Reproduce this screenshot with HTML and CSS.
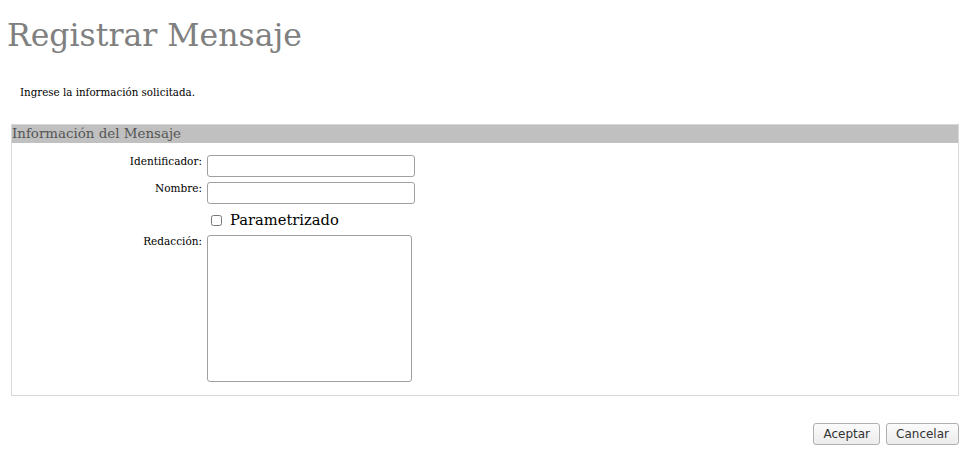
FILE: index.html
```html
<!DOCTYPE html>
<html>
<head>
<meta charset="utf-8">
<link rel="stylesheet" href="styles.css">
</head>
<body>
<h1 class="title">Registrar Mensaje</h1>
<p class="intro">Ingrese la información solicitada.</p>
<div class="panel">
  <div class="panel-head">Información del Mensaje</div>
  <div class="form">
    <label class="lbl">Identificador:</label>
    <input class="inp" type="text">
    <label class="lbl">Nombre:</label>
    <input class="inp" type="text">
    <span></span>
    <label class="chk"><input type="checkbox" class="box"><span>Parametrizado</span></label>
    <label class="lbl">Redacción:</label>
    <textarea class="area"></textarea>
  </div>
</div>
<div class="actions">
  <button class="btn">Aceptar</button>
  <button class="btn">Cancelar</button>
</div>
</body>
</html>
```
FILE: styles.css
```css
html, body { margin: 0; padding: 0; background: #fff; }
body { font-family: "DejaVu Serif", serif; color: #000; width: 975px; }
.title {
  margin: 0;
  padding: 15px 0 0 7px;
  font-weight: normal;
  font-size: 31.5px;
  line-height: 40px;
  color: #808080;
}
.intro {
  margin: 30px 0 0 20px;
  font-size: 10.3px;
  line-height: 14px;
}
.panel {
  margin: 25px 16px 0 11px;
  border: 1px solid #d8d8d8;
  height: 270px;
}
.panel-head {
  background: #c0c0c0;
  color: #555;
  font-size: 13.4px;
  line-height: 18px;
  height: 18px;
}
.form {
  display: grid;
  grid-template-columns: 190px auto;
  column-gap: 5px;
  row-gap: 5px;
  padding-top: 12px;
  justify-items: start;
  align-items: start;
}
.lbl {
  justify-self: end;
  font-size: 10.5px;
  line-height: 12px;
}
.inp {
  box-sizing: border-box;
  width: 208px;
  height: 22px;
  border: 1px solid #a0a0a0;
  border-radius: 3px;
  margin: 0;
}
.chk {
  display: flex;
  align-items: center;
  font-size: 14.7px;
  line-height: 20px;
  margin-top: 1px;
}
.box {
  margin: 0 8px 0 4px;
  width: 11px;
  height: 11px;
}
.area {
  box-sizing: border-box;
  width: 205px;
  height: 147px;
  border: 1px solid #a0a0a0;
  border-radius: 3px;
  margin: 0;
  resize: none;
}
.actions {
  display: flex;
  justify-content: flex-end;
  gap: 6px;
  margin: 27px 16px 0 0;
}
.btn {
  font-family: "DejaVu Sans", sans-serif;
  font-size: 12px;
  height: 22px;
  padding: 0 9px;
  background: linear-gradient(#fbfbfb, #ececec);
  border: 1px solid #b0b0b0;
  border-radius: 3px;
  color: #333;
}
```
